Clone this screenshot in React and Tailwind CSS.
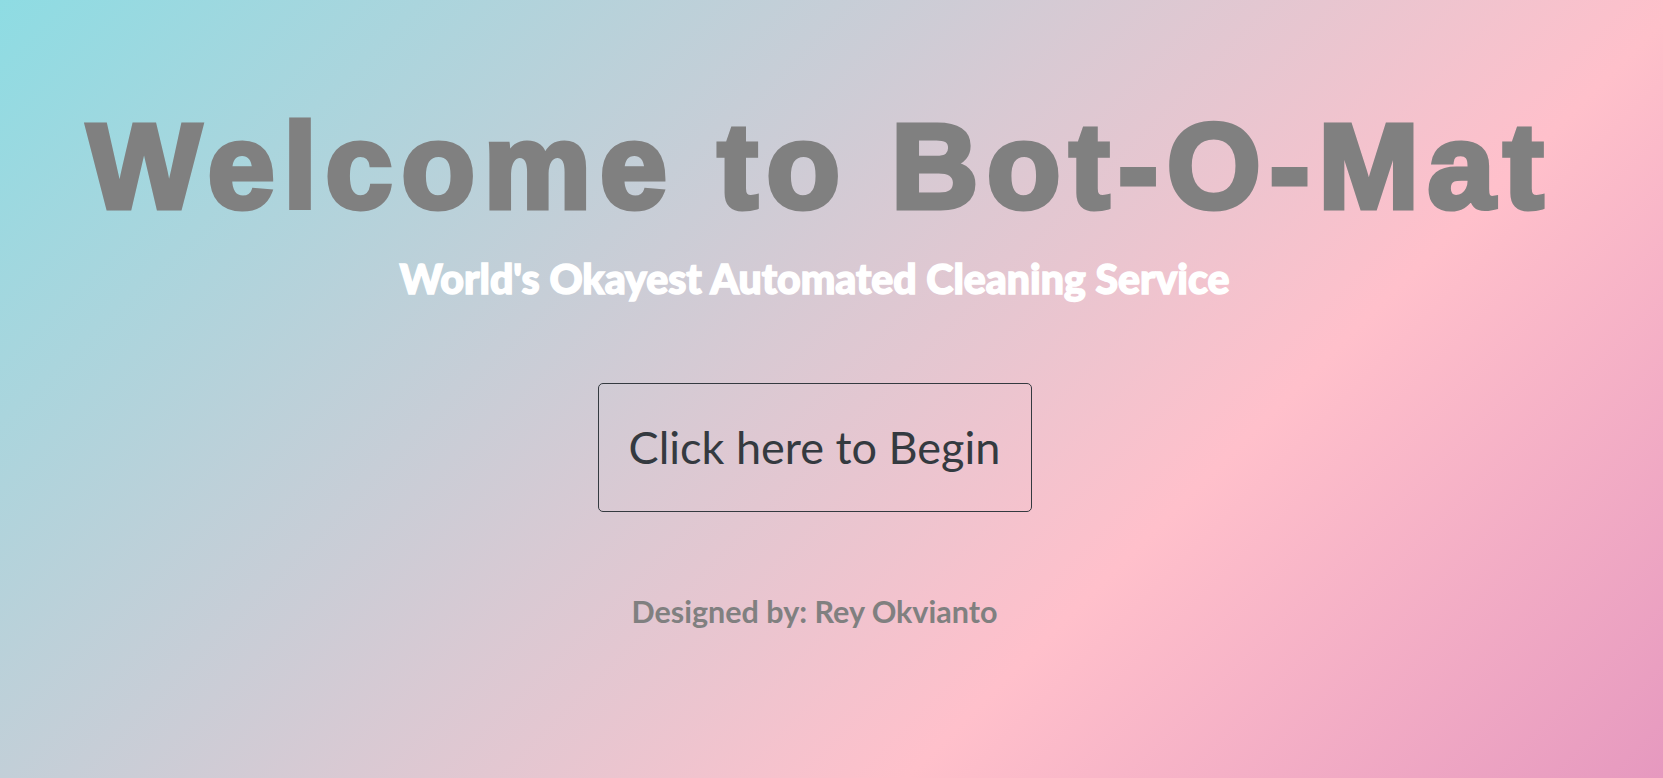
export default function App() {
  return (
    <div className="h-[778px] w-full overflow-hidden bg-[linear-gradient(135deg,#8edce3_0%,#ffc0cb_69%,#e699bf_100%)]">
      <div className="flex w-[1629px] flex-col items-center">
        {/* Title */}
        <h1 className="mt-[106px] ml-[10px] font-['Liberation_Sans',Arial,sans-serif] text-[121px] font-bold leading-none tracking-[8.5px] text-[#808080] [-webkit-text-stroke:5px_#808080]">
          Welcome to Bot-O-Mat
        </h1>

        {/* Tagline */}
        <h2 className="mt-[31px] font-['Lato',sans-serif] text-[41px] font-black leading-none text-white [-webkit-text-stroke:1.5px_#ffffff]">
          World's Okayest Automated Cleaning Service
        </h2>

        {/* Start */}
        <button className="mt-[84px] h-[129px] w-[434px] rounded-[5px] border border-[#343a40] font-['Lato',sans-serif] text-[45px] text-[#343a40]">
          Click here to Begin
        </button>

        <p className="mt-[77px] font-['Lato',sans-serif] text-[30.5px] font-bold text-[#808080]">
          Designed by: Rey Okvianto
        </p>
      </div>
    </div>
  );
}
